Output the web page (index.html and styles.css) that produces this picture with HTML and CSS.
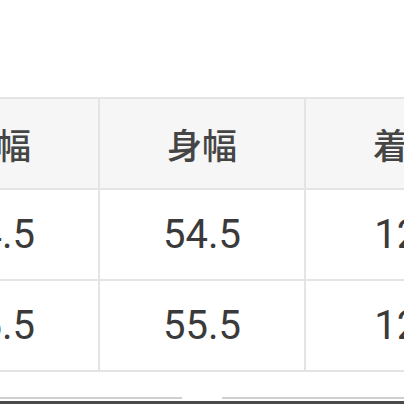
FILE: index.html
```html
<!DOCTYPE html>
<html lang="ja">
<head>
<meta charset="utf-8">
<link rel="stylesheet" href="styles.css">
</head>
<body>
<div class="page">
  <div class="top-space"></div>
  <table class="size-table">
    <thead>
      <tr><th>肩幅</th><th>身幅</th><th>着丈</th></tr>
    </thead>
    <tbody>
      <tr><td>44.5</td><td>54.5</td><td>125</td></tr>
      <tr><td>45.5</td><td>55.5</td><td>126</td></tr>
    </tbody>
  </table>
  <div class="bottom-strip"><span class="seg"></span><span class="gap"></span><span class="seg"></span></div>
</div>
</body>
</html>
```
FILE: styles.css
```css
html, body {
  margin: 0;
  padding: 0;
  background: #ffffff;
}
.page {
  width: 404px;
  height: 404px;
  overflow: hidden;
  display: flex;
  flex-direction: column;
}
.top-space {
  height: 97px;
  flex: none;
}
.size-table {
  flex: none;
  border-collapse: collapse;
  table-layout: fixed;
  width: 618px;
  margin-left: -108px;
}
.size-table th,
.size-table td {
  width: 204px;
  height: 89px;
  padding: 0;
  border: 2px solid #e4e4e4;
  text-align: center;
  vertical-align: middle;
}
.size-table th {
  background: #f6f6f6;
  font-family: "Noto Sans CJK JP", "Noto Sans", sans-serif;
  font-weight: 500;
  font-size: 35px;
  color: #454545;
}
.size-table td {
  background: #ffffff;
  font-family: Roboto, "Liberation Sans", sans-serif;
  font-size: 40px;
  color: #3a3a3a;
}
.bottom-strip {
  margin-top: auto;
  height: 7px;
  display: flex;
  border-bottom: 3px solid #4a4a4a;
  box-sizing: border-box;
}
.bottom-strip .seg {
  flex: 1;
  border-top: 2px solid #cfcfcf;
}
.bottom-strip .gap {
  width: 40px;
}
```
